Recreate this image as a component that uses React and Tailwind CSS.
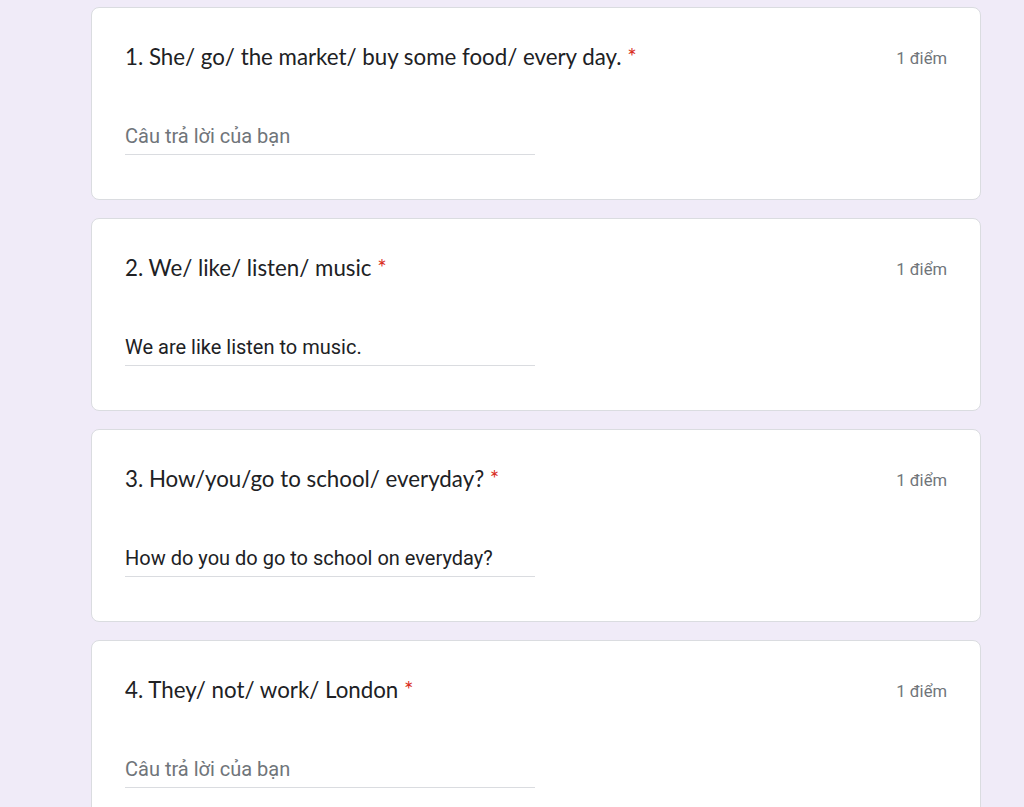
const questions = [
  { title: "1. She/ go/ the market/ buy some food/ every day.", answer: "" },
  { title: "2. We/ like/ listen/ music", answer: "We are like listen to music." },
  { title: "3. How/you/go to school/ everyday?", answer: "How do you do go to school on everyday?" },
  { title: "4. They/ not/ work/ London", answer: "" },
];

function QuestionCard({ q }) {
  return (
    <div className="h-[193px] w-[890px] shrink-0 rounded-lg border border-[#dadce0] bg-white px-[33px] pt-[37px]">
      <div className="flex h-6 items-center justify-between">
        <div className="text-[22.3px] leading-6 text-[#202124]" style={{ fontFamily: "Lato, sans-serif" }}>
          {q.title} <span className="text-[#d93025]">*</span>
        </div>
        <div className="mt-[4px] text-[16.6px] text-[#70757a]" style={{ fontFamily: "Roboto, sans-serif" }}>1 điểm</div>
      </div>
      <div className="mt-[55px] w-[410px] border-b border-[#dadce0] pb-[6px]">
        {q.answer ? (
          <div className="text-[20px] leading-6 text-[#202124]" style={{ fontFamily: "Roboto, sans-serif" }}>{q.answer}</div>
        ) : (
          <div className="text-[20px] leading-6 text-[#70757a]" style={{ fontFamily: "Roboto, sans-serif" }}>Câu trả lời của bạn</div>
        )}
      </div>
    </div>
  );
}

export default function App() {
  return (
    <div className="h-[807px] w-[1024px] overflow-hidden bg-[#f0ebf8]">
      <div className="ml-[91px] flex flex-col gap-[18px] pt-[7px]">
        {questions.map((q) => (
          <QuestionCard key={q.title} q={q} />
        ))}
      </div>
    </div>
  );
}
